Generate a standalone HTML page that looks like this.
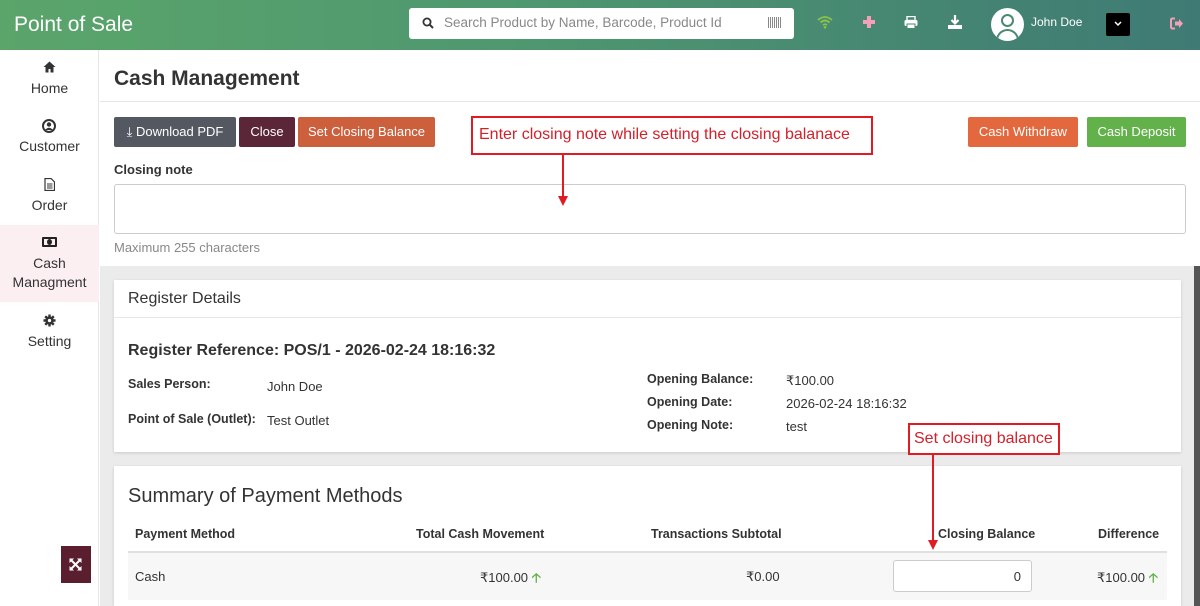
<!DOCTYPE html>
<html><head><style>
*{box-sizing:border-box;margin:0;padding:0}
body{width:1200px;height:606px;overflow:hidden;font-family:"Liberation Sans",Arial,sans-serif;color:#333;background:#fff;position:relative;font-size:13px}
.hdr{position:absolute;left:0;top:0;width:1200px;height:50px;background:linear-gradient(90deg,#5ba56b 0%,#4e9770 45%,#3f7a74 100%)}
.abs{position:absolute}
.side{position:absolute;left:0;top:50px;width:99px;height:556px;background:#fff;border-right:1px solid #e6e6e6}
.si{position:absolute;left:0;width:99px;text-align:center;font-size:14px;color:#333;line-height:18px}
.btn{position:absolute;top:117px;height:30px;color:#fff;font-size:13px;line-height:30px;text-align:center;border-radius:2px}
.gray{position:absolute;left:100px;top:266px;width:1094px;height:340px;background:#ebebeb}
.card{position:absolute;left:114px;width:1067px;background:#fff;box-shadow:0 1px 3px rgba(0,0,0,.15)}
.lbl{position:absolute;font-weight:bold;font-size:12.5px;color:#333}
.val{position:absolute;font-size:13px;color:#333}
.red{position:absolute;border:2px solid #e01b24;color:#d4202a;font-size:16px;background:#fff}
</style></head><body>
<div class="hdr"></div>
<div class="abs" style="left:14px;top:13px;font-size:21px;color:#fff">Point of Sale</div>
<div class="abs" style="left:409px;top:8px;width:385px;height:31px;background:#fff;border-radius:3px"></div>
<svg class="abs" style="left:422px;top:17px" width="12" height="12" viewBox="0 0 12 12"><circle cx="5" cy="5" r="3.6" fill="none" stroke="#333" stroke-width="1.8"/><path d="M7.6 7.6L11 11" stroke="#333" stroke-width="2"/></svg>
<div class="abs" style="left:444px;top:15px;font-size:13.5px;color:#888">Search Product by Name, Barcode, Product Id</div>
<div class="abs" style="left:768px;top:17px;width:13px;height:11px;background:repeating-linear-gradient(90deg,#888 0 1px,#fff 1px 2px)"></div>
<svg class="abs" style="left:817px;top:15px" width="16" height="14" viewBox="0 0 16 14"><path d="M1 5Q8 -1 15 5M3.5 7.5Q8 3.5 12.5 7.5M6 10Q8 8.5 10 10" fill="none" stroke="#8bc34a" stroke-width="1.8"/><circle cx="8" cy="12.3" r="1.3" fill="#8bc34a"/></svg>
<div class="abs" style="left:863px;top:20px;width:12px;height:4px;background:#f4a0b8"></div>
<div class="abs" style="left:867px;top:16px;width:4px;height:12px;background:#f4a0b8"></div>
<svg class="abs" style="left:904px;top:16px" width="14" height="13" viewBox="0 0 14 13"><rect x="3" y="0.5" width="8" height="4" fill="none" stroke="#fff" stroke-width="1.4"/><rect x="0.5" y="4" width="13" height="6" rx="1.5" fill="#fff"/><rect x="3" y="8" width="8" height="4.5" fill="#fff" stroke="#4a8a72" stroke-width="1"/></svg>
<svg class="abs" style="left:948px;top:15px" width="14" height="14" viewBox="0 0 14 14"><path d="M7 0V8M3.5 5L7 8.5L10.5 5" stroke="#fff" stroke-width="2.2" fill="none"/><rect x="0" y="10" width="14" height="4" fill="#fff"/></svg>
<div class="abs" style="left:991px;top:8px;width:33px;height:33px;border-radius:50%;background:#fff;overflow:hidden"><div class="abs" style="left:10px;top:6px;width:13px;height:13px;border-radius:50%;border:2px solid #4a8a72"></div><div class="abs" style="left:5px;top:21px;width:23px;height:16px;border-radius:12px 12px 0 0;border:2px solid #4a8a72"></div></div>
<div class="abs" style="left:1031px;top:15px;font-size:12px;color:#fff">John Doe</div>
<div class="abs" style="left:1106px;top:13px;width:24px;height:23px;background:#000;border-radius:2px"></div>
<svg class="abs" style="left:1114px;top:21px" width="8" height="6" viewBox="0 0 8 6"><path d="M1 1L4 4L7 1" stroke="#fff" stroke-width="1.5" fill="none"/></svg>
<svg class="abs" style="left:1170px;top:17px" width="14" height="13" viewBox="0 0 14 13"><path d="M5 1.5H2.5Q1 1.5 1 3V10Q1 11.5 2.5 11.5H5" stroke="#f4a0b8" stroke-width="2" fill="none"/><path d="M5 4.5H9V2L13 6.5L9 11V8.5H5Z" fill="#f4a0b8"/></svg>

<div class="side"></div>
<svg class="abs" style="left:43px;top:61px" width="13" height="12" viewBox="0 0 13 12"><path d="M6.5 0.5L0.5 6H2.5V11.5H5.5V8H7.5V11.5H10.5V6H12.5Z" fill="#333"/></svg>
<div class="si" style="top:79px">Home</div>
<svg class="abs" style="left:42px;top:119px" width="14" height="14" viewBox="0 0 14 14"><circle cx="7" cy="7" r="6" fill="none" stroke="#333" stroke-width="2"/><circle cx="7" cy="5.5" r="2.2" fill="#333"/><path d="M3 11Q7 6.5 11 11" fill="#333"/></svg>
<div class="si" style="top:137px">Customer</div>
<svg class="abs" style="left:44px;top:178px" width="11" height="13" viewBox="0 0 11 13"><path d="M1 0.5H7L10.5 4V12.5H1Z" fill="none" stroke="#333" stroke-width="1.2"/><path d="M3 6H8.5M3 8H8.5M3 10H8.5" stroke="#333" stroke-width="1"/></svg>
<div class="si" style="top:196px">Order</div>
<div class="abs" style="left:0;top:225px;width:99px;height:77px;background:#fbeff2"></div>
<div class="abs" style="left:42px;top:237px;width:15px;height:10px;border:2px solid #222;border-radius:1px"><div class="abs" style="left:3px;top:0px;width:5px;height:6px;border-radius:50%;background:#222"></div></div>
<div class="si" style="top:254px">Cash</div>
<div class="si" style="top:273px">Managment</div>
<svg class="abs" style="left:43px;top:314px" width="13" height="13" viewBox="0 0 14 14"><circle cx="7" cy="7" r="4.5" fill="#333"/><path d="M7 0.5V13.5M0.5 7H13.5M2.4 2.4L11.6 11.6M11.6 2.4L2.4 11.6" stroke="#333" stroke-width="2.6"/><circle cx="7" cy="7" r="1.8" fill="#fff"/></svg>
<div class="si" style="top:332px">Setting</div>
<div class="abs" style="left:61px;top:546px;width:30px;height:37px;background:#5b1e2e"></div>
<svg class="abs" style="left:69px;top:558px" width="13" height="13" viewBox="0 0 13 13"><path d="M1 1L12 12M12 1L1 12" stroke="#fff" stroke-width="2"/><path d="M0.5 0.5H5L0.5 5ZM12.5 0.5H8L12.5 5ZM0.5 12.5H5L0.5 8ZM12.5 12.5H8L12.5 8Z" fill="#fff"/></svg>

<div class="abs" style="left:114px;top:67px;font-size:21px;font-weight:bold;color:#333">Cash Management</div>
<div class="abs" style="left:100px;top:101px;width:1100px;height:1px;background:#e6e6e6"></div>
<div class="btn" style="left:114px;width:122px;background:#545860">&#10515; Download PDF</div>
<div class="btn" style="left:239px;width:56px;background:#5b2637">Close</div>
<div class="btn" style="left:298px;width:137px;background:#cc5f3c">Set Closing Balance</div>
<div class="btn" style="left:968px;width:110px;background:#e4683d">Cash Withdraw</div>
<div class="btn" style="left:1087px;width:99px;background:#62b14b">Cash Deposit</div>
<div class="lbl" style="left:114px;top:162px;font-size:13px">Closing note</div>
<div class="abs" style="left:114px;top:184px;width:1072px;height:50px;border:1px solid #ccc;border-radius:3px;background:#fff"></div>
<div class="abs" style="left:114px;top:240px;font-size:13px;color:#888">Maximum 255 characters</div>
<div class="red" style="left:471px;top:116px;width:402px;height:39px;padding:8px 0 0 6px">Enter closing note while setting the closing balanace</div>
<div class="abs" style="left:562px;top:155px;width:2px;height:42px;background:#e01b24"></div>
<div class="abs" style="left:558px;top:196px;border-left:5px solid transparent;border-right:5px solid transparent;border-top:10px solid #e01b24"></div>

<div class="gray"></div>
<div class="abs" style="left:1194px;top:266px;width:6px;height:340px;background:#555"></div>
<div class="card" style="top:280px;height:172px">
 <div class="abs" style="left:14px;top:10px;font-size:16px;color:#333">Register Details</div>
 <div class="abs" style="left:0;top:37px;width:1067px;height:1px;background:#e8e8e8"></div>
 <div class="abs" style="left:14px;top:62px;font-size:16px;font-weight:bold;color:#333">Register Reference: POS/1 - 2026-02-24 18:16:32</div>
 <div class="lbl" style="left:14px;top:97px">Sales Person:</div><div class="val" style="left:153px;top:99px">John Doe</div>
 <div class="lbl" style="left:14px;top:132px">Point of Sale (Outlet):</div><div class="val" style="left:153px;top:133px">Test Outlet</div>
 <div class="lbl" style="left:533px;top:92px">Opening Balance:</div><div class="val" style="left:672px;top:93px">₹100.00</div>
 <div class="lbl" style="left:533px;top:115px">Opening Date:</div><div class="val" style="left:672px;top:116px">2026-02-24 18:16:32</div>
 <div class="lbl" style="left:533px;top:138px">Opening Note:</div><div class="val" style="left:672px;top:139px">test</div>
</div>
<div class="card" style="top:466px;height:140px">
 <div class="abs" style="left:14px;top:19px;font-size:20px;color:#333">Summary of Payment Methods</div>
 <div class="lbl" style="left:21px;top:61px">Payment Method</div>
 <div class="lbl" style="left:302px;top:61px">Total Cash Movement</div>
 <div class="lbl" style="left:537px;top:61px">Transactions Subtotal</div>
 <div class="lbl" style="left:824px;top:61px">Closing Balance</div>
 <div class="lbl" style="left:984px;top:61px">Difference</div>
 <div class="abs" style="left:14px;top:85px;width:1039px;height:2px;background:#e0e0e0"></div>
 <div class="abs" style="left:14px;top:87px;width:1039px;height:47px;background:#f7f7f7"></div>
 <div class="val" style="left:21px;top:103px">Cash</div>
 <div class="val" style="left:366px;top:103px">₹100.00 <span style="color:#62b14b;font-weight:bold">&#129121;</span></div>
 <div class="val" style="left:632px;top:103px">₹0.00</div>
 <div class="abs" style="left:779px;top:94px;width:139px;height:32px;border:1px solid #ccc;border-radius:3px;background:#fff;text-align:right;padding:8px 10px 0 0;font-size:13px">0</div>
 <div class="val" style="left:983px;top:103px">₹100.00 <span style="color:#62b14b;font-weight:bold">&#129121;</span></div>
</div>
<div class="red" style="left:908px;top:423px;width:152px;height:32px;padding:5px 0 0 4px">Set closing balance</div>
<div class="abs" style="left:932px;top:455px;width:2px;height:86px;background:#e01b24"></div>
<div class="abs" style="left:928px;top:540px;border-left:5px solid transparent;border-right:5px solid transparent;border-top:10px solid #e01b24"></div>
</body></html>
